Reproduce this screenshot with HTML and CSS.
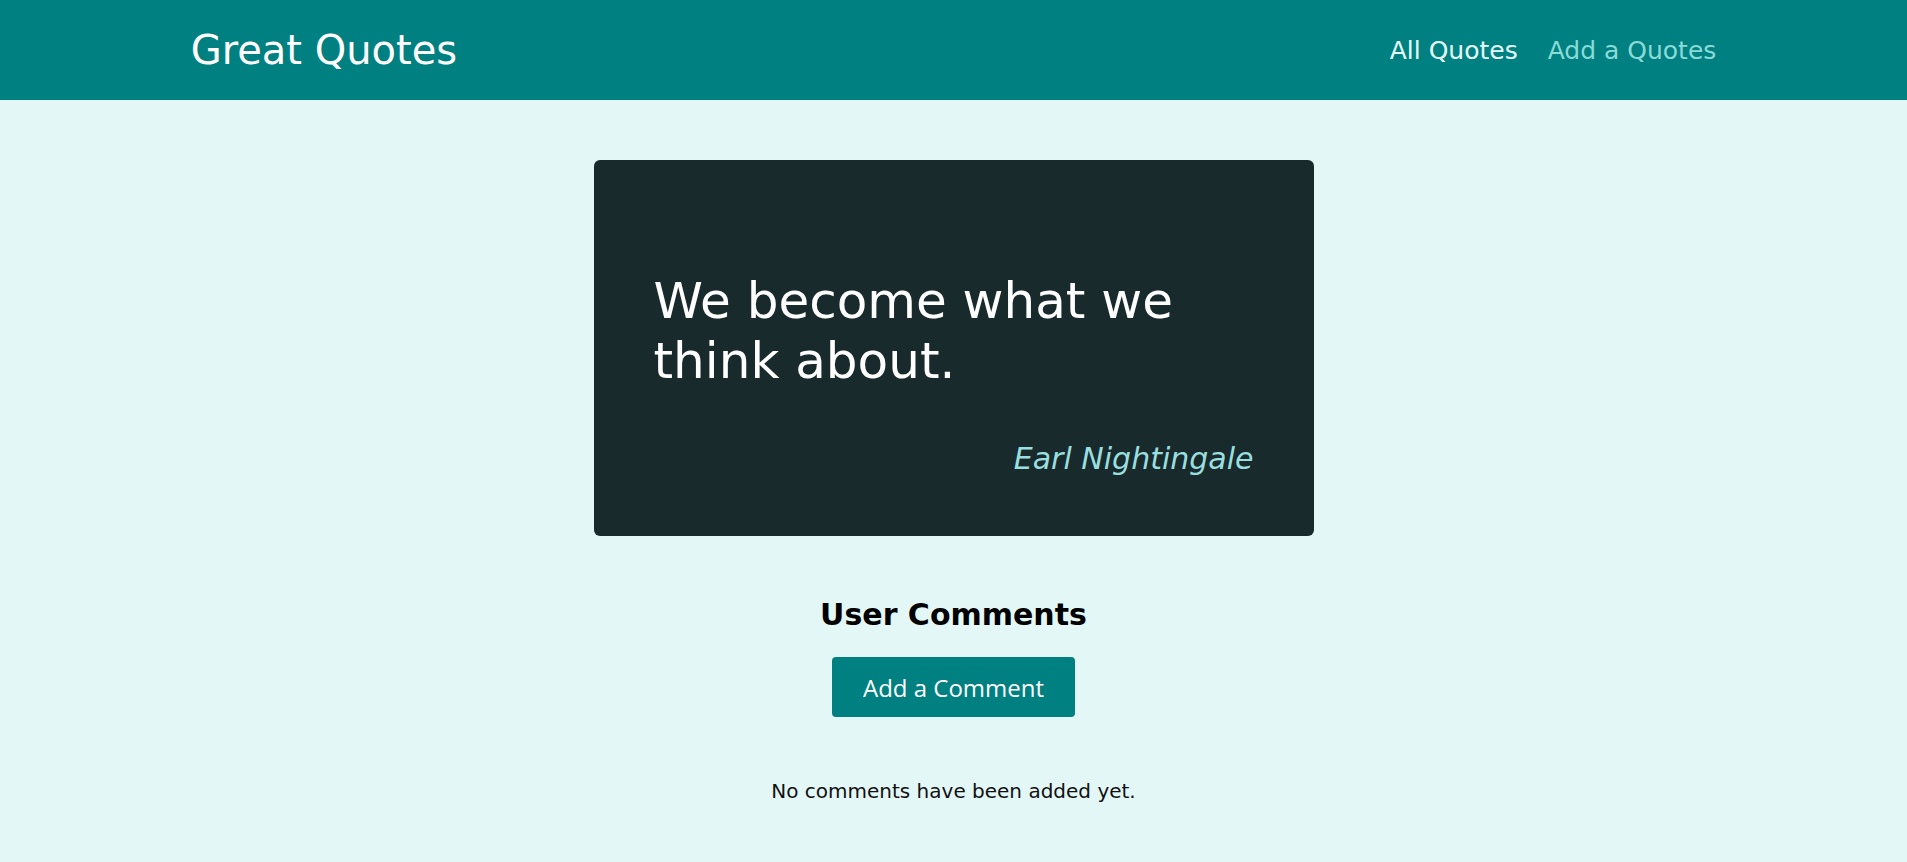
FILE: index.html
```html
<!DOCTYPE html>
<html lang="en">
<head>
<meta charset="utf-8">
<title>Great Quotes</title>
<link rel="stylesheet" href="styles.css">
</head>
<body>
<header class="header">
  <div class="logo">Great Quotes</div>
  <nav class="nav">
    <ul>
      <li><a class="active" href="#">All Quotes</a></li>
      <li><a href="#">Add a Quotes</a></li>
    </ul>
  </nav>
</header>
<main class="main">
  <figure class="quote">
    <p>We become what we think about.</p>
    <figcaption>Earl Nightingale</figcaption>
  </figure>
  <section class="comments">
    <h2>User Comments</h2>
    <button class="btn" type="button">Add a Comment</button>
    <p class="empty">No comments have been added yet.</p>
  </section>
</main>
</body>
</html>
```
FILE: styles.css
```css
* {
  box-sizing: border-box;
}

html {
  font-size: 20px;
  font-family: "DejaVu Sans", sans-serif;
}

body {
  margin: 0;
  background-color: #e4f7f7;
}

.header {
  width: 100%;
  height: 5rem;
  display: flex;
  align-items: center;
  justify-content: space-between;
  background-color: #008080;
  padding: 0 10%;
}

.logo {
  font-size: 2rem;
  color: #ffffff;
}

.nav ul {
  list-style: none;
  margin: 0;
  padding: 0;
  display: flex;
  align-items: center;
}

.nav li {
  margin-left: 1.5rem;
  font-size: 1.25rem;
}

.nav a {
  text-decoration: none;
  color: #8adbd7;
}

.nav a.active {
  color: #e6fcfc;
}

.main {
  display: flow-root;
}

.quote {
  background-color: #192a2d;
  border-radius: 6px;
  padding: 3rem;
  margin: 3rem auto;
  width: 90%;
  max-width: 36rem;
}

.quote p {
  font-size: 2.5rem;
  line-height: 1.2;
  color: #ffffff;
  margin: 51px 0 50px;
}

.quote figcaption {
  font-style: italic;
  font-size: 1.5rem;
  text-align: right;
  color: #9adfdf;
}

.comments {
  text-align: center;
  padding-top: 1px;
}

.comments h2 {
  font-size: 1.5rem;
  font-weight: bold;
  color: #000;
  margin: 0 0 0.83em;
}

.btn {
  cursor: pointer;
  font-family: "Open Sans", sans-serif;
  font-size: 24px;
  line-height: 32px;
  color: #ffffff;
  background-color: #008080;
  border: none;
  padding: 15px 31px 13px;
  border-radius: 4px;
}

.empty {
  margin: 62px 0 3rem;
  font-size: 1rem;
  color: #111;
}
```
